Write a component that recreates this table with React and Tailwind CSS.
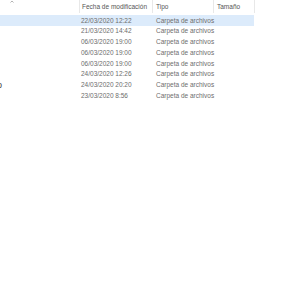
const rows = [
  { date: '22/03/2020 12:22', selected: true },
  { date: '21/03/2020 14:42' },
  { date: '06/03/2020 19:00' },
  { date: '06/03/2020 19:00' },
  { date: '06/03/2020 19:00' },
  { date: '24/03/2020 12:26' },
  { date: '24/03/2020 20:20', name: 'o' },
  { date: '23/03/2020 8:56' },
];

export default function App() {
  return (
    <div className="w-[300px] h-[300px] bg-white overflow-hidden text-[6.5px] leading-none text-[#6d6d6d] whitespace-nowrap" style={{ fontFamily: '"Liberation Sans", Arial, sans-serif' }}>
      {/* header */}
      <div className="flex h-[13px] items-center">
        <div className="w-[79px] h-full relative">
          <svg className="absolute left-[10px] top-0" width="4" height="3" viewBox="0 0 4 3">
            <path d="M0.5 2.5 L2 1 L3.5 2.5" stroke="#a0a0a0" strokeWidth="0.8" fill="none" />
          </svg>
        </div>
        <div className="w-[73px] h-full border-l border-[#e8e8e8] pl-[2px] pt-[1px] flex items-center text-[#555]">Fecha de modificación</div>
        <div className="w-[61px] h-full border-l border-[#e8e8e8] pl-[3px] pt-[1px] flex items-center text-[#555]">Tipo</div>
        <div className="w-[42px] h-full border-x border-[#e8e8e8] pl-[3px] pt-[1px] flex items-center text-[#555]">Tamaño</div>
      </div>
      <div className="h-[2px]" />
      {/* rows */}
      <div className="flex flex-col">
        {rows.map((r, i) => (
          <div key={i} className={`flex items-center pt-[1px] h-[10.77px] w-[254px] ${r.selected ? 'bg-[#dcebfb]' : ''}`}>
            <div className="w-[78px] text-[#444] text-[9px] overflow-hidden">
              <span className="block -ml-[3px]">{r.name || ''}</span>
            </div>
            <div className="w-[78px] pl-[3px]">{r.date}</div>
            <div className="flex-1">Carpeta de archivos</div>
          </div>
        ))}
      </div>
    </div>
  );
}
